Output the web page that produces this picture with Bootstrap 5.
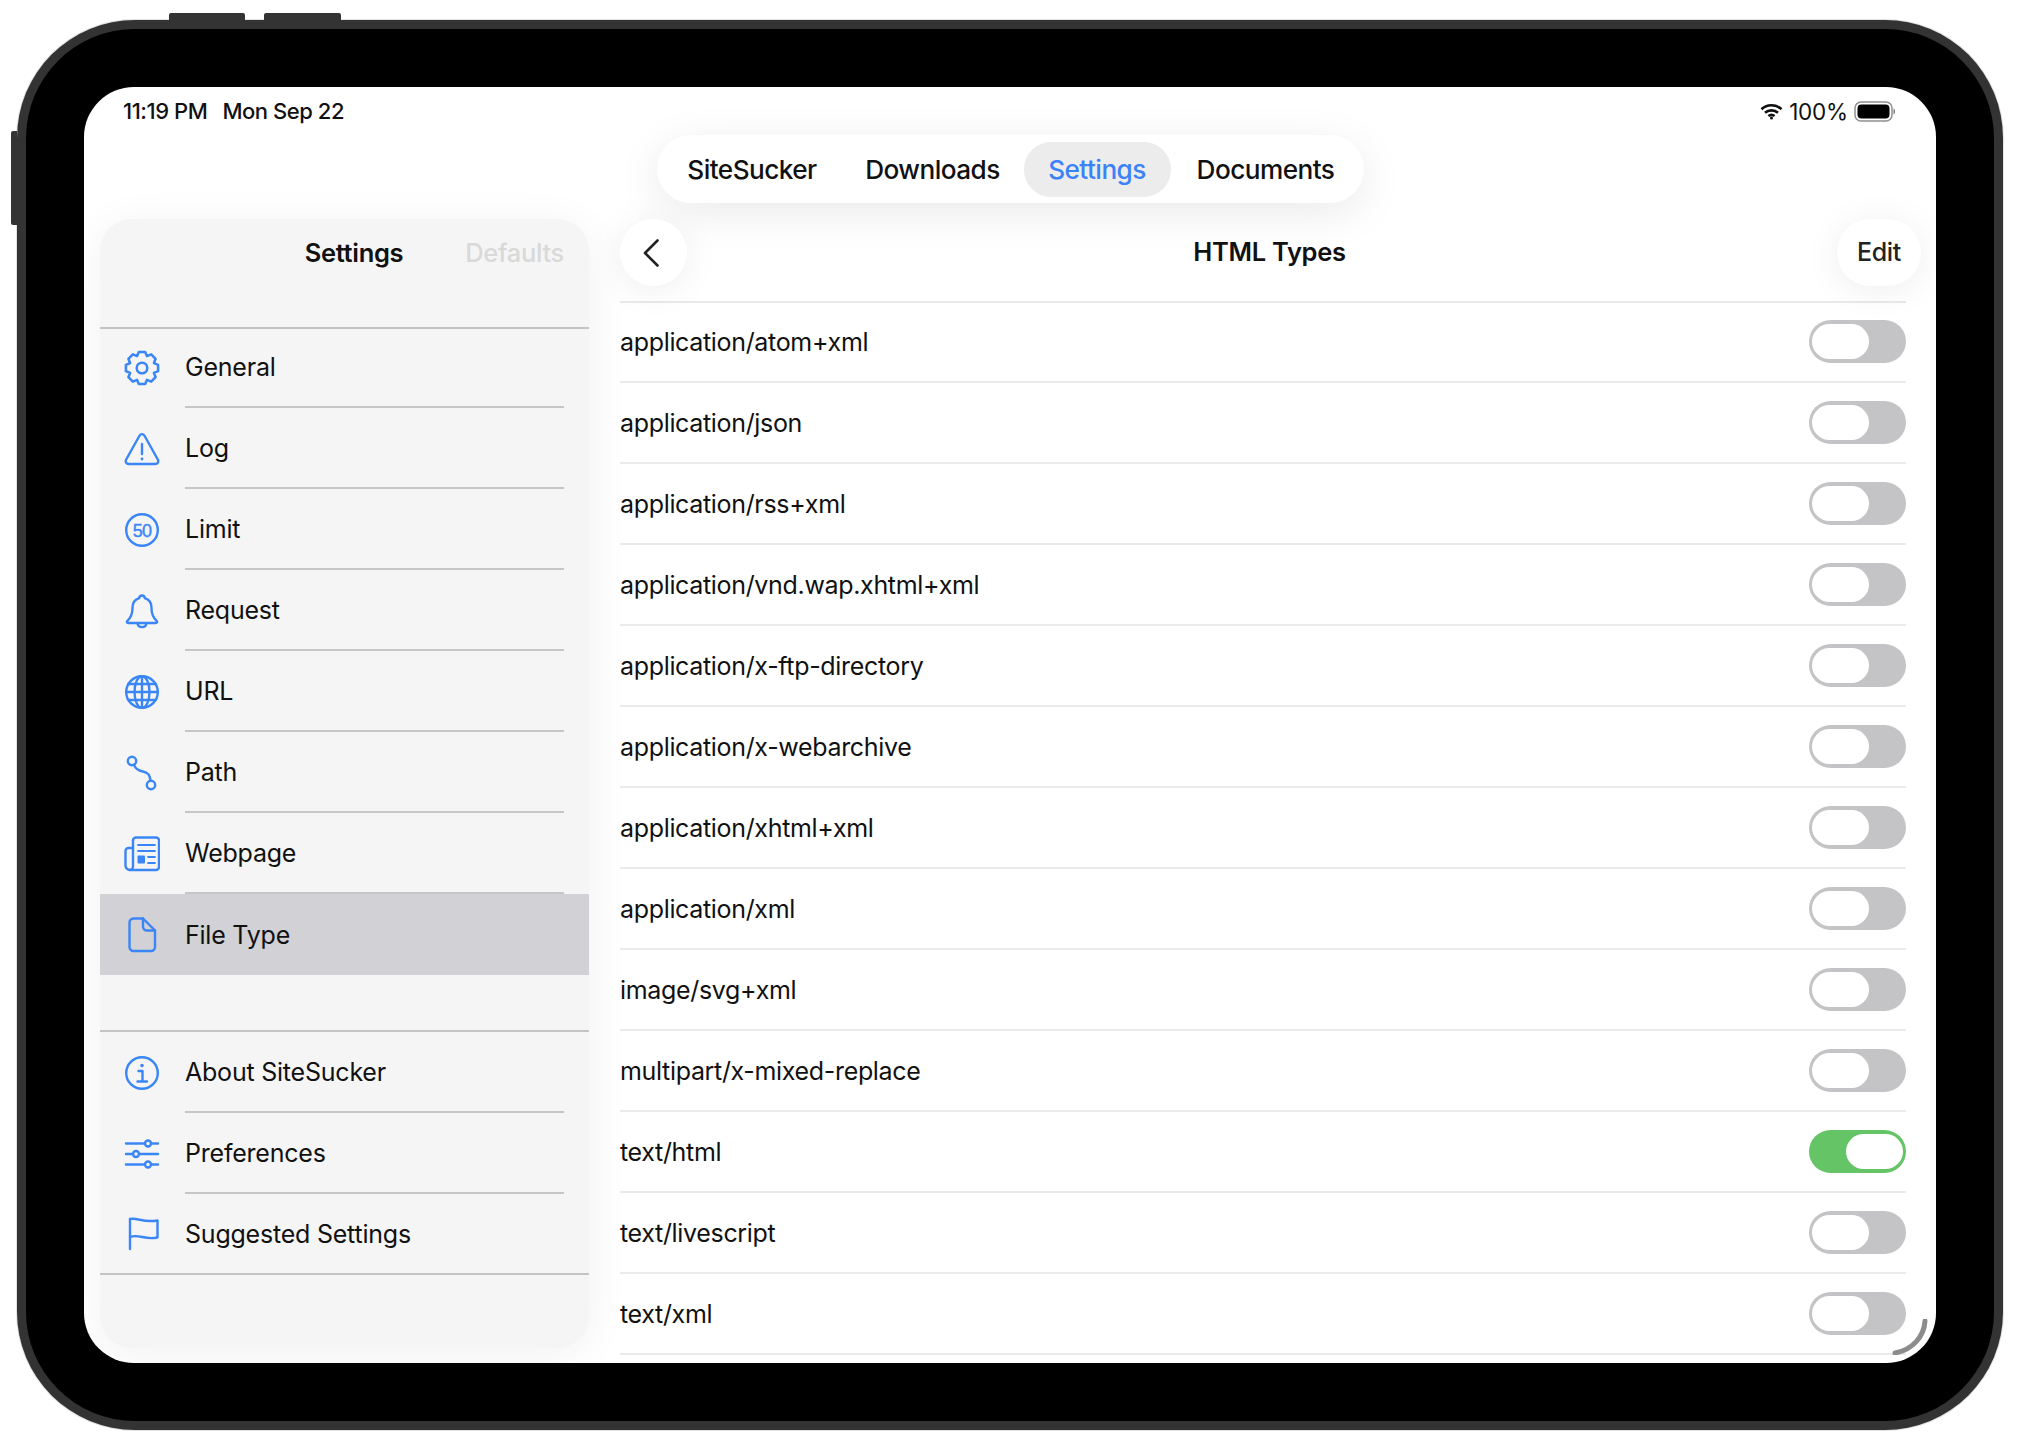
<!DOCTYPE html>
<html lang="en">
<head>
<meta charset="utf-8">
<title>SiteSucker Settings</title>
<link href="https://cdn.jsdelivr.net/npm/bootstrap@5.3.0/dist/css/bootstrap.min.css" rel="stylesheet">
<style>
html,body{background:#fff;margin:0;height:1454px;overflow:hidden}
body{font-family:Inter,"Noto Sans",sans-serif;color:#111;font-size:25px;letter-spacing:-.33px}
.dev-wrap{padding:20px 17px 0}
.dev-frame{position:relative;width:1986px;height:1410px;background:#333;border-radius:118px;padding:9px;box-shadow:0 0 0 1px #e2e2e2}
.dev-btn{position:absolute;background:#333}
.dev-btn-a{left:152px;top:-7px;width:76px;height:7px;border-radius:2px 2px 0 0}
.dev-btn-b{left:247px;top:-7px;width:77px;height:7px;border-radius:2px 2px 0 0}
.dev-btn-c{left:-6px;top:111px;width:6px;height:94px;border-radius:2px 0 0 2px}
.dev-bezel{background:#000;border-radius:109px;height:100%;padding:58px}
.dev-screen{position:relative;background:#fff;border-radius:50px;height:100%;overflow:hidden}
.stat-bar{height:48px;padding:1px 40px 0 39px;font-size:22px;font-weight:500;letter-spacing:-.45px}
.stat-bar .gap-t{margin-left:15px}
.stat-r{font-weight:400;font-size:22.5px;letter-spacing:-.2px}
.wifi-ico{margin-right:6px}
.batt-ico{margin-left:6px}
.tab-shell{width:707px;height:68px;background:#fff;border-radius:34px;box-shadow:0 10px 44px rgba(0,0,0,.085);padding:7px 0}
.tab-shell .nav-link{color:#111;font-size:26.2px;font-weight:500;letter-spacing:-.55px;height:55px;padding:0;border-radius:27px;display:flex;align-items:center;justify-content:center}
.tab-shell .nav-link.active{background:#ececec;color:#3b82f6}
.tw1{width:191px}.tw2{width:176px;padding-right:6px!important}.tw3{width:147px}.tw4{width:193px;padding-right:3px!important}
.main-row{margin-top:16px;padding:0 30px 0 16px;gap:31px}
.side-panel{width:489px;height:1129px;flex:none;background:#f5f5f5;border-radius:32px;box-shadow:0 6px 44px rgba(0,0,0,.06)}
.side-head{height:110px;padding:0 25px 40px 0;border-bottom:2px solid #c4c4c4;gap:62px;font-weight:600;font-size:25.5px}
.side-head .dim{color:#d9d9d9;font-weight:500}
.side-panel .list-group{--bs-list-group-bg:transparent;--bs-list-group-border-width:0;border-radius:0}
.side-one{margin-top:-2px}
.side-item{height:81px;padding:0;display:flex;align-items:center;color:#111;background:transparent;letter-spacing:-.22px}
.side-item.picked{background:#d1d1d6}
.ico-cell{width:85px;flex:none;padding-left:24px;display:flex}
.ico-cell svg{width:36px;height:36px;fill:none;stroke:#3b86f7;stroke-width:2.4;stroke-linecap:round;stroke-linejoin:round;display:block}
.side-lab{flex:1;height:100%;margin-right:25px;padding-top:3px;border-bottom:2px solid #c6c6c6;display:flex;align-items:center}
.side-item.picked .side-lab,.side-item.endrow .side-lab{border-bottom:0}
.side-item.endrow{border-bottom:2px solid #c4c4c4}
.side-two{margin-top:55px;border-top:2px solid #c4c4c4}
.detail-col{flex:1;min-width:0}
.detail-head{height:84px;border-bottom:2px solid #e9e9e9}
.round-act{height:67px;background:#fff;border-radius:34px;box-shadow:0 4px 36px rgba(0,0,0,.07);border:0;color:#222;padding:0;display:flex;align-items:center;justify-content:center;font-size:25px;letter-spacing:-.3px;font-weight:500}
.back-act{width:67px}
.back-act svg{margin-right:4px}
.edit-act{width:84px;margin-right:-15px}
.head-title{height:67px;font-weight:600;font-size:25.5px;letter-spacing:-.3px;padding-left:15px}
.detail-col .list-group{--bs-list-group-bg:transparent;--bs-list-group-border-width:0;border-radius:0;margin-top:-1px}
.type-row{height:81px;padding:0;border-bottom:2px solid #ebebeb!important;color:#111;background:transparent}
.type-name{padding-top:2px}
.tgl{display:block;position:relative;width:97px;height:43px;border-radius:22px;background:#c4c4c6;flex:none}
.tgl::after{content:"";position:absolute;top:4px;left:3px;width:57px;height:35px;border-radius:18px;background:#fff}
.tgl.on{background:#65c466}
.tgl.on::after{left:37px}
.corner-arc{position:absolute;right:8px;bottom:8px;width:36px;height:36px;fill:none;stroke:#8c8c8c;stroke-width:5;stroke-linecap:round}
</style>
</head>
<body>
<div class="dev-wrap">
<div class="dev-frame">
  <span class="dev-btn dev-btn-a"></span><span class="dev-btn dev-btn-b"></span><span class="dev-btn dev-btn-c"></span>
  <div class="dev-bezel">
  <div class="dev-screen">
    <div class="stat-bar d-flex align-items-center justify-content-between">
      <div><span>11:19 PM</span><span class="gap-t">Mon Sep 22</span></div>
      <div class="stat-r d-flex align-items-center">
        <svg width="23" height="17" viewBox="0 0 23 17" class="wifi-ico" fill="none" stroke="#111" stroke-width="2.6"><path d="M1.500 6.200C7 1 16 1 21.500 6.200"/><path d="M5 9.800C8.600 6.600 14.400 6.600 18 9.800"/><path d="M8.400 13C10.200 11.600 12.800 11.600 14.600 13"/><circle cx="11.500" cy="15" r="1.500" fill="#111" stroke="none"/></svg>
        <span>100%</span>
        <svg width="42" height="21" viewBox="0 0 42 21" class="batt-ico"><rect x="1" y="1" width="37" height="19" rx="6" fill="none" stroke="#8e8e8e" stroke-width="1.500"/><rect x="3.500" y="3.500" width="32" height="14" rx="4" fill="#000"/><path d="M39.500 7.500C41.500 8 41.500 13 39.500 13.500Z" fill="#777"/></svg>
      </div>
    </div>
    <div class="d-flex justify-content-center">
      <ul class="nav tab-shell">
        <li class="nav-item"><a class="nav-link tw1" href="#">SiteSucker</a></li>
        <li class="nav-item"><a class="nav-link tw2" href="#">Downloads</a></li>
        <li class="nav-item"><a class="nav-link active tw3" href="#">Settings</a></li>
        <li class="nav-item"><a class="nav-link tw4" href="#">Documents</a></li>
      </ul>
    </div>
    <div class="main-row d-flex align-items-start">
      <aside class="side-panel">
        <div class="side-head d-flex align-items-center justify-content-end"><span>Settings</span><span class="dim">Defaults</span></div>
        <div class="list-group side-one">
          <a class="list-group-item side-item" href="#"><span class="ico-cell"><svg viewBox="0 0 34 34"><path d="M14.040 1.800H19.960L21.670 5.730 25.670 4.150 29.850 8.330 28.270 12.330 32.200 14.040V19.960L28.270 21.670 29.850 25.670 25.670 29.850 21.670 28.270 19.960 32.200H14.040L12.330 28.270 8.330 29.850 4.150 25.670 5.730 21.670 1.800 19.960V14.040L5.730 12.330 4.150 8.330 8.330 4.150 12.330 5.730Z"/><circle cx="17" cy="17" r="5"/></svg></span><span class="side-lab">General</span></a>
          <a class="list-group-item side-item" href="#"><span class="ico-cell"><svg viewBox="0 0 36 36"><path d="M15.600 4.500C16.700 2.600 19.300 2.600 20.400 4.500L33.800 28.500C35 30.800 33.700 33 31.300 33H4.700C2.300 33 1 30.800 2.200 28.500Z"/><path d="M18 13V23"/><circle cx="18" cy="28" r="1.400" fill="#3b86f7" stroke="none"/></svg></span><span class="side-lab">Log</span></a>
          <a class="list-group-item side-item" href="#"><span class="ico-cell"><svg viewBox="0 0 36 36"><circle cx="18" cy="18" r="15.800"/><text x="18" y="24.500" text-anchor="middle" font-family="Liberation Sans,sans-serif" font-size="18" fill="#3b86f7" stroke="#3b86f7" stroke-width=".4" letter-spacing="-.8">50</text></svg></span><span class="side-lab">Limit</span></a>
          <a class="list-group-item side-item" href="#"><span class="ico-cell"><svg viewBox="0 0 36 36"><path d="M18 2.500C16.300 2.500 15.300 3.600 15.200 5.200 10.700 6.500 8.500 10.400 8.500 15 8.500 21 7.500 24 3.400 27.800 2.400 28.800 2.900 30 4.200 30H31.800C33.100 30 33.600 28.800 32.600 27.800 28.500 24 27.500 21 27.500 15 27.500 10.400 25.300 6.500 20.800 5.200 20.700 3.600 19.700 2.500 18 2.500Z"/><path d="M13.500 30.500A4.600 4.600 0 0 0 22.500 30.500"/></svg></span><span class="side-lab">Request</span></a>
          <a class="list-group-item side-item" href="#"><span class="ico-cell"><svg viewBox="0 0 36 36"><circle cx="18" cy="18" r="15.800"/><ellipse cx="18" cy="18" rx="7.500" ry="15.800"/><path d="M18 2.200V33.800M2.200 18H33.800M4.500 10H31.500M4.500 26H31.500"/></svg></span><span class="side-lab">URL</span></a>
          <a class="list-group-item side-item" href="#"><span class="ico-cell"><svg viewBox="0 0 36 36"><circle cx="8" cy="6" r="4.200"/><circle cx="27" cy="30" r="4.200"/><path d="M10 9.800C11.500 14 14 15.500 19 16.500 24 17.500 26 20 26.500 25.800"/></svg></span><span class="side-lab">Path</span></a>
          <a class="list-group-item side-item" href="#"><span class="ico-cell"><svg viewBox="0 0 36 36"><path d="M9 4.500A3 3 0 0 1 12 1.500H32A3 3 0 0 1 35 4.500V31A3 3 0 0 1 32 34H6A4.500 4.500 0 0 1 1.500 29.500V15A3 3 0 0 1 4.500 12H9"/><path d="M9 4.500V30.500A3.500 3.500 0 0 1 5.500 34"/><path d="M14 9H31M14 15H31M24 21H31M24 27H31" stroke-width="1.800"/><rect x="13.500" y="19.500" width="7.500" height="8" rx="1" fill="#3b86f7" stroke="none"/></svg></span><span class="side-lab">Webpage</span></a>
          <a class="list-group-item side-item picked" href="#"><span class="ico-cell"><svg viewBox="0 0 36 36"><path d="M9.500 1.500H19L31 13.500V30A4 4 0 0 1 27 34H9.500A4 4 0 0 1 5.500 30V5.500A4 4 0 0 1 9.500 1.500Z"/><path d="M19 1.500V9.500A4 4 0 0 0 23 13.500H31"/></svg></span><span class="side-lab">File Type</span></a>
        </div>
        <div class="list-group side-two">
          <a class="list-group-item side-item" href="#"><span class="ico-cell"><svg viewBox="0 0 36 36"><circle cx="18" cy="18" r="15.800"/><circle cx="18" cy="10.500" r="1.800" fill="#3b86f7" stroke="none"/><path d="M14.500 16H18.500V26M13.500 26.500H23"/></svg></span><span class="side-lab">About SiteSucker</span></a>
          <a class="list-group-item side-item" href="#"><span class="ico-cell"><svg viewBox="0 0 36 36"><path d="M2 7.500H21M27 7.500H34M2 18H9M15 18H34M2 28.500H21M27 28.500H34"/><circle cx="24" cy="7.500" r="3"/><circle cx="12" cy="18" r="3"/><circle cx="24" cy="28.500" r="3"/></svg></span><span class="side-lab">Preferences</span></a>
          <a class="list-group-item side-item endrow" href="#"><span class="ico-cell"><svg viewBox="0 0 36 36"><path d="M6 3V33"/><path d="M6 3C14 1.500 19 7 33.500 4.500V21.500C21 24.500 15 17.500 6 21"/></svg></span><span class="side-lab">Suggested Settings</span></a>
        </div>
      </aside>
      <section class="detail-col">
        <div class="detail-head d-flex align-items-start justify-content-between">
          <button class="round-act back-act" type="button" aria-label="Back"><svg width="20" height="30" viewBox="0 0 20 30" fill="none" stroke="#222" stroke-width="2.600" stroke-linecap="round" stroke-linejoin="round"><path d="M15.500 2.500L3 15 15.500 27.500"/></svg></button>
          <div class="head-title d-flex align-items-center">HTML Types</div>
          <button class="round-act edit-act" type="button">Edit</button>
        </div>
        <div class="list-group">
          <div class="list-group-item type-row d-flex align-items-center justify-content-between"><span class="type-name">application/atom+xml</span><span class="tgl"></span></div>
          <div class="list-group-item type-row d-flex align-items-center justify-content-between"><span class="type-name">application/json</span><span class="tgl"></span></div>
          <div class="list-group-item type-row d-flex align-items-center justify-content-between"><span class="type-name">application/rss+xml</span><span class="tgl"></span></div>
          <div class="list-group-item type-row d-flex align-items-center justify-content-between"><span class="type-name">application/vnd.wap.xhtml+xml</span><span class="tgl"></span></div>
          <div class="list-group-item type-row d-flex align-items-center justify-content-between"><span class="type-name">application/x-ftp-directory</span><span class="tgl"></span></div>
          <div class="list-group-item type-row d-flex align-items-center justify-content-between"><span class="type-name">application/x-webarchive</span><span class="tgl"></span></div>
          <div class="list-group-item type-row d-flex align-items-center justify-content-between"><span class="type-name">application/xhtml+xml</span><span class="tgl"></span></div>
          <div class="list-group-item type-row d-flex align-items-center justify-content-between"><span class="type-name">application/xml</span><span class="tgl"></span></div>
          <div class="list-group-item type-row d-flex align-items-center justify-content-between"><span class="type-name">image/svg+xml</span><span class="tgl"></span></div>
          <div class="list-group-item type-row d-flex align-items-center justify-content-between"><span class="type-name">multipart/x-mixed-replace</span><span class="tgl"></span></div>
          <div class="list-group-item type-row d-flex align-items-center justify-content-between"><span class="type-name">text/html</span><span class="tgl on"></span></div>
          <div class="list-group-item type-row d-flex align-items-center justify-content-between"><span class="type-name">text/livescript</span><span class="tgl"></span></div>
          <div class="list-group-item type-row d-flex align-items-center justify-content-between"><span class="type-name">text/xml</span><span class="tgl"></span></div>
        </div>
      </section>
    </div>
    <svg class="corner-arc" viewBox="0 0 36 36"><path d="M33 2C32 18 20 31 3 34"/></svg>
  </div>
  </div>
</div>
</div>
<script src="https://cdn.jsdelivr.net/npm/bootstrap@5.3.0/dist/js/bootstrap.bundle.min.js"></script>
</body>
</html>
